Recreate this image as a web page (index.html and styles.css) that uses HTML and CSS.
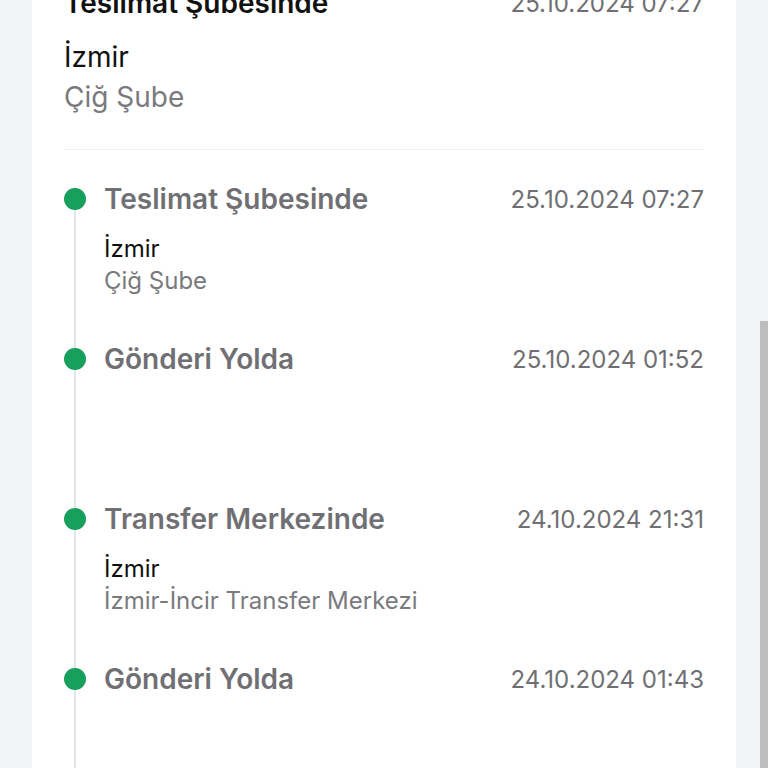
FILE: index.html
```html
<!DOCTYPE html>
<html lang="tr">
<head>
    <meta charset="UTF-8">
    <title>Gönderi Takip</title>
    <link rel="stylesheet" href="styles.css">
</head>

<body>
    <div class="card">
        <div class="summary">
            <div class="summary-head">
                <span class="summary-title">Teslimat Şubesinde</span>
                <span class="date">25.10.2024 07:27</span>
            </div>
            <div class="summary-city">İzmir</div>
            <div class="summary-branch">Çiğ Şube</div>
        </div>

        <div class="timeline">
            <div class="step">
                <span class="dot"></span>
                <div class="step-body">
                    <div class="step-head">
                        <span class="step-title">Teslimat Şubesinde</span>
                        <span class="date">25.10.2024 07:27</span>
                    </div>
                    <div class="step-city">İzmir</div>
                    <div class="step-branch">Çiğ Şube</div>
                </div>
            </div>

            <div class="step">
                <span class="dot"></span>
                <div class="step-body">
                    <div class="step-head">
                        <span class="step-title">Gönderi Yolda</span>
                        <span class="date">25.10.2024 01:52</span>
                    </div>
                </div>
            </div>

            <div class="step">
                <span class="dot"></span>
                <div class="step-body">
                    <div class="step-head">
                        <span class="step-title">Transfer Merkezinde</span>
                        <span class="date">24.10.2024 21:31</span>
                    </div>
                    <div class="step-city">İzmir</div>
                    <div class="step-branch">İzmir-İncir Transfer Merkezi</div>
                </div>
            </div>

            <div class="step">
                <span class="dot"></span>
                <div class="step-body">
                    <div class="step-head">
                        <span class="step-title">Gönderi Yolda</span>
                        <span class="date">24.10.2024 01:43</span>
                    </div>
                </div>
            </div>
        </div>
    </div>

    <div class="scroll-thumb"></div>
</body>
</html>
```

FILE: styles.css
```css
body {
    font-family: Inter, "Noto Sans", sans-serif;
    background: #f3f4f6;
    margin: 0;
    padding: 0;
    overflow: hidden;
}

.card {
    background: #fff;
    margin: -13px 32px 0;
    padding: 0 32px;
    min-height: 900px;
}

.summary {
    padding-bottom: 32px;
    border-bottom: 1px solid #f1f1f3;
}

.summary-head {
    display: flex;
    justify-content: space-between;
    align-items: center;
    height: 32px;
}

.summary-title {
    font-size: 28px;
    font-weight: 600;
    color: #111;
}

.date {
    font-size: 24px;
    color: #6f6f73;
}

.summary-city {
    margin-top: 18px;
    font-size: 28px;
    line-height: 40px;
    color: #111;
}

.summary-branch {
    font-size: 28px;
    line-height: 40px;
    color: #7a7a7e;
}

.timeline {
    padding-top: 33px;
}

.step {
    display: flex;
    gap: 18px;
    min-height: 160px;
    position: relative;
}

.step::before {
    content: "";
    position: absolute;
    left: 10px;
    top: 16px;
    bottom: -16px;
    width: 2px;
    background: #e4e4e7;
}

.dot {
    flex: none;
    width: 22px;
    height: 22px;
    margin-top: 5px;
    border-radius: 50%;
    background: #17a05b;
    position: relative;
    z-index: 1;
}

.step-body {
    flex: 1;
}

.step-head {
    display: flex;
    justify-content: space-between;
    align-items: center;
    height: 32px;
}

.step-title {
    font-size: 28px;
    font-weight: 600;
    color: #707074;
}

.step-city {
    margin-top: 18px;
    font-size: 24px;
    line-height: 32px;
    color: #111;
}

.step-branch {
    font-size: 24px;
    line-height: 32px;
    color: #7a7a7e;
}

.scroll-thumb {
    position: fixed;
    right: 0;
    top: 321px;
    width: 8px;
    height: 447px;
    background: #bdbdbd;
}
```
